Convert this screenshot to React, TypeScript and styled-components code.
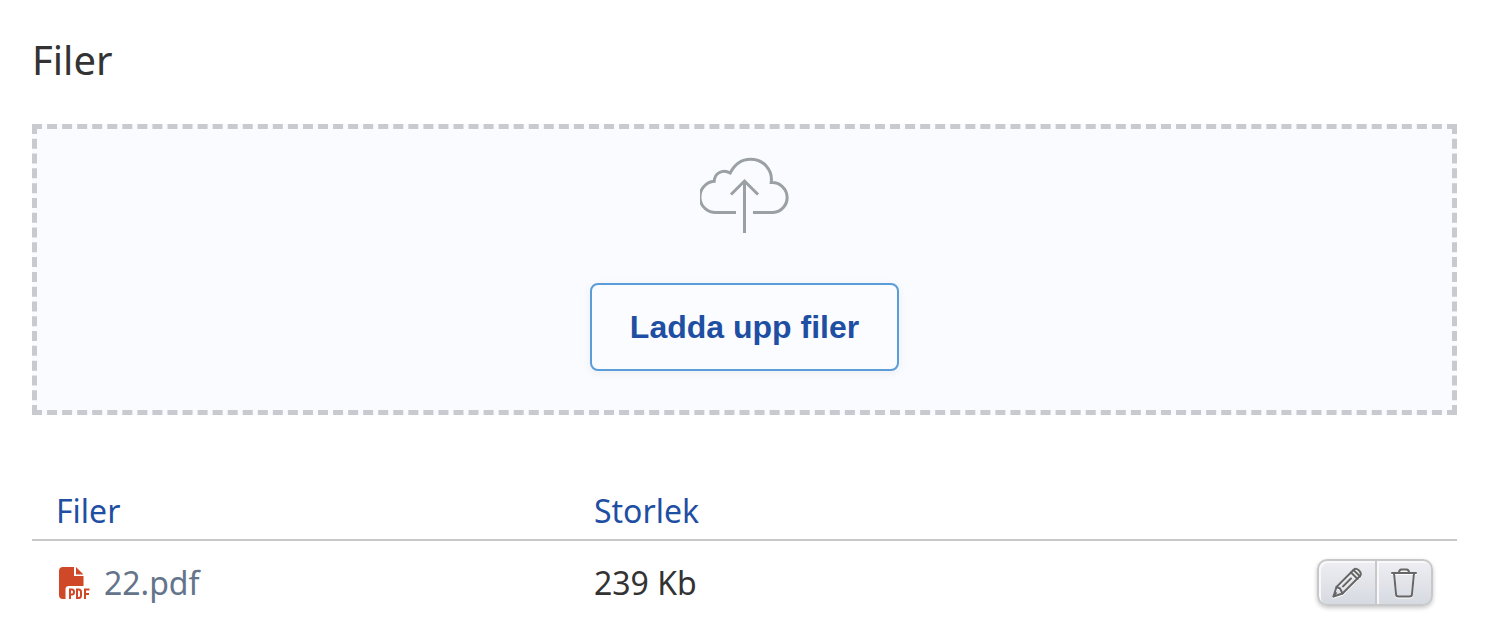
import React from 'react';
import styled, { createGlobalStyle } from 'styled-components';

const GlobalStyle = createGlobalStyle`
  *, *::before, *::after { box-sizing: border-box; }
  body {
    margin: 0;
    background: #fff;
    color: #333;
    font-family: "Noto Sans", sans-serif;
    font-size: 32px;
    line-height: 44px;
  }
`;

const Page = styled.main`
  padding: 32px 35px 20px 32px;
`;

const Title = styled.h1`
  margin: 0 0 36px;
  font-size: 40px;
  font-weight: 400;
  line-height: 56px;
`;

const DropZone = styled.section`
  display: flex;
  flex-direction: column;
  align-items: center;
  gap: 48px;
  padding: 28px 24px 39px;
  border: 5px dashed #c9cacf;
  background: #fafbff;
`;

const CloudIcon = styled.svg`
  display: block;
  width: 90px;
  height: 78px;
  fill: none;
  stroke: #9aa0a3;
  stroke-width: 3;
`;

const UploadButton = styled.button`
  height: 88px;
  padding: 0 38px;
  border: 2px solid #5b9dd9;
  border-radius: 8px;
  background: #fbfcff;
  box-shadow: 0 2px 10px rgba(0, 0, 0, 0.06);
  color: #1f4fa3;
  font: bold 32px/44px "Liberation Sans", Arial, sans-serif;
  cursor: pointer;
`;

const FileTable = styled.table`
  width: 100%;
  margin-top: 72px;
  border-collapse: collapse;
  table-layout: fixed;
`;

const HeadCell = styled.th<{ $width?: string }>`
  width: ${({ $width }) => $width ?? 'auto'};
  padding: 2px 24px 6px;
  border-bottom: 2px solid #c8c8c8;
  color: #1f4fa3;
  font-weight: 400;
  text-align: left;
`;

const Cell = styled.td`
  height: 84px;
  padding: 0 24px;
  vertical-align: middle;
`;

const FileLink = styled.a`
  display: flex;
  align-items: center;
  gap: 12px;
  color: #64748b;
  text-decoration: none;
`;

const PdfIcon = styled.svg`
  width: 36px;
  height: 34px;
`;

const Actions = styled.div`
  display: flex;
  width: fit-content;
  margin-left: auto;
  border-radius: 10px;
  box-shadow: 0 2px 4px rgba(0, 0, 0, 0.22);
`;

const ActionButton = styled.button`
  display: flex;
  align-items: center;
  justify-content: center;
  width: 56px;
  height: 47px;
  padding: 0;
  border: 2px solid #c8c8ca;
  border-left-width: 0;
  background: linear-gradient(#eeeef3, #d6dae1);
  box-shadow: inset 2px 2px 0 #f8f8fb;
  cursor: pointer;

  &:first-child {
    width: 60px;
    border-left-width: 2px;
    border-radius: 10px 0 0 10px;
  }

  &:last-child {
    border-radius: 0 10px 10px 0;
  }
`;

const ActionIcon = styled.svg`
  width: 30px;
  height: 32px;
  fill: none;
  stroke: #666;
  stroke-width: 2;
  stroke-linejoin: round;
  stroke-linecap: round;
  filter: drop-shadow(0 1px 0 #fff);
`;

const files = [{ name: '22.pdf', size: '239 Kb' }];

export default function App() {
  return (
    <>
      <GlobalStyle />
      <Page>
        <Title>Filer</Title>
        <DropZone>
          <CloudIcon viewBox="20 17 90 78" aria-hidden="true">
            <path d="M56 72.5H37A15.5 15.5 0 0 1 34.2 41.3C34.5 33.5 42.5 28.5 50.2 33C55 23.5 62 19.2 70.5 19.2C83.500 19.200 93 30 91.200 42.500A15 15 0 0 1 93 72.500H73" />
            <path d="M64.5 93V41M51 54.500L64.500 41L78 54.500" />
          </CloudIcon>
          <UploadButton type="button">Ladda upp filer</UploadButton>
        </DropZone>
        <FileTable>
          <thead>
            <tr>
              <HeadCell scope="col" $width="37.75%">Filer</HeadCell>
              <HeadCell scope="col">Storlek</HeadCell>
              <HeadCell scope="col" aria-label="Åtgärder" />
            </tr>
          </thead>
          <tbody>
            {files.map((file) => (
              <tr key={file.name}>
                <Cell>
                  <FileLink href="#">
                    <PdfIcon viewBox="0 0 36 34" aria-hidden="true">
                      <path
                        fill="#cf4827"
                        d="M7 1H18V10H27.500V20H13Q9.500 20 9.500 23V33H7Q3 33 3 29V5Q3 1 7 1ZM20 1L27.500 8.500H20Z"
                      />
                      <path
                        fill="none"
                        stroke="#cf4827"
                        strokeWidth="2"
                        d="M14 33V23.500H16Q18 23.500 18 26T16 28.500H14M21 23.500V32H22.500Q25 32 25 29.500V26Q25 23.500 22.500 23.500ZM29 33V23.500H33.500M29 28H33"
                      />
                    </PdfIcon>
                    {file.name}
                  </FileLink>
                </Cell>
                <Cell>{file.size}</Cell>
                <Cell>
                  <Actions>
                    <ActionButton type="button" aria-label="Redigera">
                      <ActionIcon viewBox="0 0 30 32" aria-hidden="true">
                        <path d="M1.500 29.500L4.500 20L21.500 3Q24 0.500 27 3.500T28 9L10.500 26.500Z" />
                        <path d="M19 5.500L25.500 12M21.500 3L28 9.500M4.500 20L8 21.500L10.500 26.500M11 19.500L19 11.500M1.500 29.500L4 26" />
                      </ActionIcon>
                    </ActionButton>
                    <ActionButton type="button" aria-label="Ta bort">
                      <ActionIcon viewBox="0 0 30 32" aria-hidden="true">
                        <path d="M3 6H27M5 6L7 27Q7 29.500 9.500 29.500H20.500Q23 29.500 23 27L25 6M10 6Q10 2.500 12.500 2.500H17.500Q20 2.500 20 6" />
                      </ActionIcon>
                    </ActionButton>
                  </Actions>
                </Cell>
              </tr>
            ))}
          </tbody>
        </FileTable>
      </Page>
    </>
  );
}
